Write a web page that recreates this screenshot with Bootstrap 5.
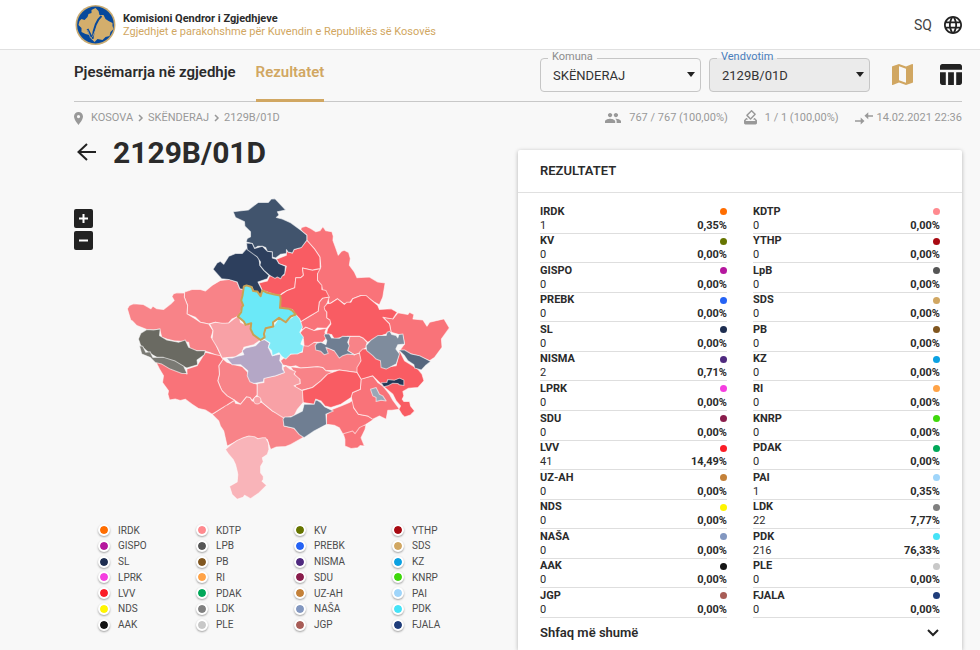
<!DOCTYPE html>
<html lang="sq">
<head>
<meta charset="utf-8">
<meta name="viewport" content="width=device-width, initial-scale=1">
<title>Rezultatet - 2129B/01D</title>
<link href="https://cdn.jsdelivr.net/npm/bootstrap@5.3.0/dist/css/bootstrap.min.css" rel="stylesheet">
<style>
body { font-family: Roboto, "Liberation Sans", sans-serif; background: #f8f8f8; color: #2b2b2b; font-size: 12px; line-height: 16px; }
a { color: inherit; text-decoration: none; }
.page-pad { padding-left: 74px; padding-right: 18px; }
.topbar { background: #fff; border-bottom: 1px solid #e0e0e0; height: 50px; }
.org { font-size: 11px; line-height: 13px; margin-left: 6px; }
.org b { font-weight: 700; }
.gold { color: #d1a762; }
.lang { font-size: 14px; color: #444; }
.toolbar { border-bottom: 1px solid #c8c8c8; min-height: 51px; }
.tab { font-size: 15px; font-weight: 600; line-height: 20px; padding: 12px 0 17px; border-bottom: 3px solid transparent; margin-bottom: -1px; }
.tab.on { color: #d1a762; border-color: #d1a762; margin-left: 20px; }
.field { width: 161px; height: 34px; margin-top: 8px; }
.field select { appearance: none; width: 100%; height: 100%; border: 1px solid #c6c6c6; border-radius: 4px; background: transparent; padding: 2px 12px 0; font-size: 13px; color: #333; }
.field.on select { background: #ebebeb; }
.field label { position: absolute; left: 8px; top: -9px; padding: 0 4px; font-size: 11px; line-height: 16px; color: #8d8d8d; background: linear-gradient(#f8f8f8 0 0) bottom / 100% 8px no-repeat; }
.field.on label { color: #4a7ebb; background: linear-gradient(#ebebeb 0 0) bottom / 100% 7px no-repeat; }
.field svg { position: absolute; right: 5px; top: 14px; pointer-events: none; }
.views { gap: 27px; margin-left: 22px; padding-top: 14px; }
.muted { color: #999; font-size: 11px; line-height: 16px; padding-top: 8px; }
.content { padding-top: 4px; }
.place { font-size: 30px; font-weight: 700; line-height: 36px; }
.map-area { padding-top: 18px; }
.map-zoom { position: absolute; left: 0; top: 37px; gap: 3px; }
.map-zoom button { width: 19px; height: 19px; border: 0; border-radius: 2px; background: #222; color: #fff; padding: 0; display: grid; place-items: center; }
.map { display: block; width: 76%; margin-left: 46px; }
.map polygon, .map circle { stroke: #fff; stroke-opacity: .6; stroke-width: 3; stroke-linejoin: round; }
.map .picked { stroke: #c9a254; stroke-opacity: 1; stroke-width: 6; }
.legend { display: grid; grid-template-columns: repeat(4, 1fr); grid-auto-rows: 1fr; min-height: 110px; margin-top: 11px; padding: 0 28px 0 24px; font-size: 10px; line-height: 15px; color: #4c4c4c; }
.legend i { width: 12px; height: 12px; border: 2px solid #fff; border-radius: 50%; box-shadow: 0 1px 2px rgba(0,0,0,.35); margin-right: 8px; background-clip: padding-box; }
.results { background: #fff; box-shadow: 0 1px 4px rgba(0,0,0,.28); border-radius: 2px 2px 0 0; margin-top: 20px; }
.results h2 { font-size: 13px; font-weight: 600; line-height: 16px; padding: 13px 22px; border-bottom: 1px solid #e0e0e0; margin-bottom: 11px; }
.scores { display: grid; grid-template-columns: 1fr 1fr; column-gap: 26px; grid-auto-rows: 1fr; min-height: 414px; padding: 0 22px; font-size: 11px; }
.score { display: grid; grid-template-columns: 1fr auto; align-content: end; line-height: 14px; border-bottom: 1px solid #dedede; }
.score b { font-weight: 700; }
.score i { width: 7px; height: 7px; border-radius: 50%; place-self: center end; }
.more { font-size: 13px; font-weight: 600; line-height: 16px; padding: 7px 22px; border: 0; background: none; color: inherit; }
</style>
</head>
<body class="d-flex flex-column min-vh-100">
<header class="topbar page-pad d-flex align-items-center">
  <svg width="43" height="42" viewBox="0 0 42 42" aria-hidden="true">
    <circle cx="21" cy="21" r="20" fill="#c9ab72"/><circle cx="21" cy="21" r="18.4" fill="#07499c"/>
    <path fill="#d3ae6c" d="M5 17l2-2 3 1 3-3 1-3 3-1 0-3 4-2 3 3 1 4 4 0 2 4 3 2 4 2 0 3 1 3-3 3-1 4-4 1-3 3-5-1-3 3-3-3-2-4-4-1-4-2 0-4-3-3z"/>
    <path d="M27 12c-6 5-8 13-9 23M13 25l4 8" fill="none" stroke="#07499c" stroke-width="2"/>
    <path d="M13 26l3 8 3 2M22 24l-4 9" fill="none" stroke="#b9a98a" stroke-width=".8"/>
  </svg>
  <div class="org">
    <div><b>Komisioni Qendror i Zgjedhjeve</b></div>
    <div class="gold">Zgjedhjet e parakohshme për Kuvendin e Republikës së Kosovës</div>
  </div>
  <a href="#" class="lang ms-auto d-flex align-items-center gap-2">SQ
    <svg class="ms-1" width="18" height="18" viewBox="2 2 20 20" fill="#222"><path d="M11.99 2C6.47 2 2 6.48 2 12s4.47 10 9.99 10C17.52 22 22 17.52 22 12S17.52 2 11.99 2zm6.93 6h-2.95c-.32-1.25-.78-2.45-1.38-3.56 1.84.63 3.37 1.91 4.33 3.56zM12 4.04c.83 1.2 1.48 2.53 1.91 3.96h-3.82c.43-1.43 1.08-2.76 1.91-3.96zM4.26 14C4.1 13.36 4 12.69 4 12s.1-1.36.26-2h3.38c-.08.66-.14 1.32-.14 2s.06 1.34.14 2H4.26zm.82 2h2.95c.32 1.25.78 2.45 1.38 3.56-1.84-.63-3.37-1.9-4.33-3.56zm2.95-8H5.08c.96-1.66 2.49-2.93 4.33-3.56C8.81 5.55 8.35 6.75 8.03 8zM12 19.96c-.83-1.2-1.48-2.53-1.91-3.96h3.82c-.43 1.43-1.08 2.76-1.91 3.96zM14.34 14H9.66c-.09-.66-.16-1.32-.16-2s.07-1.35.16-2h4.68c.09.65.16 1.32.16 2s-.07 1.34-.16 2zm.25 5.56c.6-1.11 1.06-2.31 1.38-3.56h2.95c-.96 1.65-2.49 2.93-4.33 3.56zM16.36 14c.08-.66.14-1.32.14-2s-.06-1.34-.14-2h3.38c.16.64.26 1.31.26 2s-.1 1.36-.26 2h-3.38z"/></svg>
  </a>
</header>

<main class="page-pad flex-grow-1 d-flex flex-column">
  <div class="toolbar d-flex align-items-start">
    <nav class="d-flex align-self-stretch">
      <a href="#" class="tab">Pjesëmarrja në zgjedhje</a>
      <a href="#" class="tab on" aria-current="page">Rezultatet</a>
    </nav>
    <div class="d-flex ms-auto gap-2">
      <div class="field position-relative">
        <select id="komuna"><option>SKËNDERAJ</option></select><label for="komuna">Komuna</label>
        <svg width="10" height="6" viewBox="0 0 10 6"><path d="M1 0h8L5 5z" fill="#222"/></svg>
      </div>
      <div class="field on position-relative">
        <select id="vend"><option>2129B/01D</option></select><label for="vend">Vendvotim</label>
        <svg width="10" height="6" viewBox="0 0 10 6"><path d="M1 0h8L5 5z" fill="#222"/></svg>
      </div>
    </div>
    <div class="views d-flex">
      <button class="btn border-0 p-0 lh-1" aria-label="Harta"><svg width="21" height="21" viewBox="3 3 18 18" fill="#d1a762"><path d="M20.5 3l-.16.03L15 5.1 9 3 3.36 4.9c-.21.07-.36.25-.36.48V20.5c0 .28.22.5.5.5l.16-.03L9 18.9l6 2.1 5.64-1.9c.21-.07.36-.25.36-.48V3.5c0-.28-.22-.5-.5-.5zM15 19l-6-2.11V5l6 2.11V19z"/></svg></button>
      <button class="btn border-0 p-0 lh-1" aria-label="Tabela"><svg width="22" height="21" viewBox="3 3 19 18" fill="#222"><path d="M10 10.02h5V21h-5zM17 21h3c1.1 0 2-.9 2-2v-9h-5v11zm3-18H5c-1.1 0-2 .9-2 2v3h19V5c0-1.1-.9-2-2-2zM3 19c0 1.1.9 2 2 2h3V10H3v9z"/></svg></button>
    </div>
  </div>

  <div class="muted d-flex align-items-center">
    <svg class="me-2" width="9" height="13" viewBox="5 2 14 20" fill="#999"><path d="M12 2C8.13 2 5 5.13 5 9c0 5.25 7 13 7 13s7-7.75 7-13c0-3.87-3.13-7-7-7zm0 9.5a2.5 2.5 0 0 1 0-5 2.5 2.5 0 0 1 0 5z"/></svg>
    <nav class="d-flex align-items-center gap-1" aria-label="breadcrumb">
      <a href="#">KOSOVA</a><svg width="7" height="8" viewBox="0 0 7 8" fill="none" stroke="#999" stroke-width="1.5"><path d="M2 1l3 3-3 3"/></svg>
      <a href="#">SKËNDERAJ</a><svg width="7" height="8" viewBox="0 0 7 8" fill="none" stroke="#999" stroke-width="1.5"><path d="M2 1l3 3-3 3"/></svg>
      <a href="#">2129B/01D</a>
    </nav>
    <div class="d-flex align-items-center ms-auto">
      <svg class="me-2" width="16" height="16" viewBox="1 1 22 22" fill="#999"><path d="M16 11c1.66 0 2.99-1.34 2.99-3S17.66 5 16 5s-3 1.34-3 3 1.34 3 3 3zm-8 0c1.66 0 2.99-1.34 2.99-3S9.66 5 8 5 5 6.34 5 8s1.34 3 3 3zm0 2c-2.33 0-7 1.17-7 3.5V19h14v-2.5c0-2.33-4.67-3.5-7-3.5zm8 0c-.29 0-.62.02-.97.05 1.16.84 1.97 1.97 1.97 3.45V19h6v-2.5c0-2.33-4.67-3.5-7-3.5z"/></svg>
      <span>767 / 767 (100,00%)</span>
      <svg class="ms-3 me-2" width="13" height="16" viewBox="3 2 18 22" fill="#999"><path d="M18 13h-.68l-2 2h1.91L19 17H5l1.78-2h2.05l-2-2H6l-3 3v4c0 1.1.89 2 1.99 2H19c1.1 0 2-.89 2-2v-4l-3-3zm-1-5.05l-4.95 4.95-3.54-3.54 4.95-4.95L17 7.95zm-4.24-5.66L6.39 8.66c-.39.39-.39 1.02 0 1.41l4.95 4.95c.39.39 1.02.39 1.41 0l6.36-6.36c.39-.39.39-1.02 0-1.41L14.16 2.3c-.38-.4-1.01-.4-1.4-.01z"/></svg>
      <span>1 / 1 (100,00%)</span>
      <svg class="ms-3 me-1" width="18" height="13" viewBox="0 0 19 13" fill="#999"><path d="M0 8.3h6V5.5l4 3.7-4 3.7v-3H0zM19 3h-5V0l-4 3.7 4 3.7V4.6h5z"/></svg>
      <span>14.02.2021 22:36</span>
    </div>
  </div>

  <div class="content row gx-0 flex-grow-1">
    <section class="col-6">
      <div class="d-flex align-items-center pt-2">
        <a href="#" class="me-3 lh-1" aria-label="Kthehu"><svg width="23" height="22" viewBox="0 0 23 22" fill="none" stroke="#222" stroke-width="2"><path d="M22 10H5M13 2l-8.500 8 8.500 8"/></svg></a>
        <h1 class="place mb-0 lh-1">2129B/01D</h1>
      </div>
      <div class="map-area position-relative mt-1">
        <div class="map-zoom d-grid">
          <button aria-label="Zmadho"><svg width="9" height="9" viewBox="0 0 9 9" stroke="#fff" stroke-width="2"><path d="M0 4.5h9M4.5 0v9"/></svg></button>
          <button aria-label="Zvogëlo"><svg width="9" height="9" viewBox="0 0 9 9" stroke="#fff" stroke-width="2"><path d="M0 4.5h9"/></svg></button>
        </div>
        <svg class="map" viewBox="0 0 1008 960" role="img" aria-label="Harta e komunave">
          <g fill="#f88388">
            <polygon points="193,305 215,297 240,297 255,302 275,285 300,270 325,267 350,275 358,295 368,297 365,325 368,345 360,365 352,378 335,385 325,397 305,400 285,395 265,400 240,395 225,380 200,370 202,345 192,320"/>
            <polygon points="22,355 28,345 40,340 70,342 92,355 98,347 110,355 130,357 152,340 162,330 155,318 160,310 170,307 193,308 192,320 202,345 200,370 225,385 240,395 265,400 278,420 272,440 285,455 290,470 305,502 270,486 250,480 210,480 205,455 180,452 160,450 140,445 125,440 118,415 100,418 80,417 50,405 38,392 32,388 28,375"/>
            <polygon points="480,510 500,492 545,485 545,465 562,460 580,455 600,460 640,480 700,492 715,485 722,505 708,545 655,538 615,540 605,530 590,528 540,532 525,525 510,528 485,522"/>
            <polygon points="510,528 540,532 590,528 605,530 615,540 635,543 615,555 600,570 575,590 542,598 525,590 523,582 538,578 537,565 525,562 520,545"/>
            <polygon points="685,438 715,437 726,442 738,455 735,470 720,485 700,492 680,480"/>
            <polygon points="308,505 320,515 345,523 365,527 382,545 387,565 400,577 410,580 410,612 395,628 388,620 378,618 360,640 342,628 320,615 305,600 300,590 292,570 297,550 295,525"/>
            <polygon points="275,670 310,648 318,635 320,642 342,628 345,637 360,640 378,618 388,620 395,630 425,635 455,660 490,675 490,705 520,712 550,738 510,760 495,766 467,768 450,775 440,745 412,743 380,737 350,750 320,765 310,720 300,705 295,690"/>
          </g>
          <polygon fill="#f9b4b9" points="315,775 330,762 350,748 368,740 385,735 402,737 412,743 425,740 435,740 443,755 445,775 440,790 425,800 428,812 420,825 420,845 428,855 428,865 424,870 438,882 415,905 390,922 380,916 372,912 368,918 350,924 335,910 327,885 350,872 352,850 350,840 345,820 338,805 325,790"/>
          <g fill="#f97379">
            <polygon points="540,118 542,112 555,108 570,115 585,125 597,122 606,110 615,122 633,125 637,138 636,150 645,175 652,195 662,183 670,180 683,187 688,205 685,225 700,245 708,262 745,260 770,275 792,278 785,320 775,343 760,335 735,318 720,315 695,325 685,338 670,340 650,325 625,340 620,320 605,300 603,290 590,270 590,245 600,230 597,200 580,175 558,150 558,135 545,125"/>
            <polygon points="625,320 620,335 612,355 618,365 618,382 630,390 628,400 617,413 590,412 580,420 555,410 545,418 537,405 540,393 565,378 592,362 595,335 605,323"/>
            <polygon points="545,418 555,410 580,420 617,413 612,425 620,440 605,455 580,455 562,467 550,465 548,445 535,430"/>
            <polygon points="785,380 815,385 830,367 860,372 865,365 878,372 875,385 905,388 917,407 925,395 968,385 984,412 960,445 962,470 940,500 925,510 890,495 835,480 850,460 845,435 810,425 805,400"/>
            <polygon points="107,513 130,510 200,550 200,535 230,525 255,485 300,495 308,505 295,525 297,550 292,570 300,590 305,600 320,615 342,628 320,642 310,648 275,670 255,657 235,653 215,640 195,625 180,629 165,624 148,627 143,610 145,600 127,575 130,555 118,535"/>
            <polygon points="617,670 635,655 660,645 685,635 700,625 698,650 712,670 740,675 758,685 735,700 732,715 720,740 730,765 718,763 710,770 690,772 672,765 672,740 655,710 640,703 617,700"/>
            <polygon points="735,700 715,710 702,728 695,720 667,728 672,745 672,765 690,772 710,770 718,763 730,765 720,740 732,715"/>
            <polygon points="690,615 695,605 718,595 720,565 755,555 770,575 785,585 805,610 815,628 835,655 812,658 800,658 795,685 775,675 755,685 740,675 712,670 698,650"/>
          </g>
          <g fill="#f95c63">
            <polygon points="558,150 580,175 597,200 598,235 585,237 575,240 555,235 545,233 548,255 540,262 525,262 522,292 500,300 485,308 478,315 462,312 440,305 425,300 415,278 440,272 447,257 490,255 497,228 475,220 467,207 497,195 497,180 502,185 515,188 520,178 540,172"/>
            <polygon points="545,233 575,240 598,235 590,250 590,270 603,285 603,297 615,300 625,320 605,323 595,335 592,362 565,378 540,393 525,375 515,357 480,352 478,315 500,300 522,292 525,262 540,262 548,255"/>
            <polygon points="610,350 618,340 630,338 650,325 670,342 678,335 690,335 695,325 720,315 735,315 750,328 770,345 775,357 810,355 828,365 815,385 785,380 805,400 810,425 780,435 755,448 740,455 726,442 715,437 680,437 640,445 632,432 617,430 620,415 630,400 627,388 618,382 618,365 612,358"/>
            <polygon points="715,485 725,475 737,475 780,510 785,530 825,525 835,480 850,510 890,535 902,550 908,570 890,590 862,592 845,602 848,615 843,625 848,632 865,632 868,645 880,660 868,672 850,678 842,670 833,655 838,645 825,630 815,610 785,585 755,555 720,565 708,545 708,530 720,510"/>
            <polygon points="542,600 575,590 600,570 620,550 655,538 708,545 720,565 718,595 695,605 690,620 660,640 630,650 612,645 600,630 585,625 580,640 547,635"/>
          </g>
          <polygon fill="#41546d" points="338,65 362,62 383,60 413,37 443,37 452,27 463,26 495,60 470,65 475,75 467,82 485,87 510,98 540,120 558,135 558,150 542,172 520,178 515,188 502,185 497,178 497,190 480,192 465,203 455,200 455,185 440,183 435,172 425,168 412,168 402,175 395,160 377,155 380,145 390,140 390,125 373,108 372,95 345,82"/>
          <polygon fill="#2d3f5d" points="278,237 290,218 300,213 310,222 325,198 345,190 365,190 378,175 395,183 415,205 418,225 430,240 445,255 440,265 412,275 425,300 418,317 400,305 395,290 375,285 368,297 358,295 350,275 325,267 303,265"/>
          <polygon fill="#2d3f5d" points="378,158 395,160 402,175 425,168 440,183 455,185 455,203 467,207 475,220 494,228 492,250 484,258 480,265 470,260 463,264 447,255 430,240 418,225 420,215 410,200 380,178"/>
          <g fill="#f8a1a6">
            <polygon points="268,400 285,395 305,398 325,397 340,385 355,375 360,395 375,403 388,400 395,425 420,448 400,462 370,470 365,485 345,498 305,502 295,480 290,470 275,445 278,420"/>
            <polygon points="410,578 430,575 430,562 465,555 490,545 487,530 495,525 508,535 525,542 520,550 537,565 538,578 520,585 545,600 547,635 530,655 520,675 490,682 455,660 425,635 410,615"/>
            <circle cx="410" cy="628" r="11"/>
          </g>
          <polygon fill="#b4a7c6" points="318,502 335,502 350,497 370,492 365,480 375,472 405,465 420,450 433,447 447,457 443,470 455,495 480,490 477,510 485,520 485,535 492,545 465,555 430,563 428,573 400,578 388,573 380,555 382,540 360,522 335,522"/>
          <polygon fill="#80ebf8" points="430,445 435,413 458,408 475,382 495,395 525,372 537,385 542,400 545,410 537,425 548,440 540,460 548,465 545,482 530,490 510,490 495,505 483,497 475,486 455,495 453,480 443,470 448,457"/>
          <polygon class="picked" fill="#6be9f8" points="370,288 378,285 393,290 398,302 410,303 420,317 425,300 440,307 462,312 478,315 480,325 478,352 505,355 515,360 525,372 510,378 495,395 475,382 457,395 458,408 435,413 430,430 432,440 420,448 398,432 390,415 392,398 375,403 370,393 352,378 362,365 364,350 368,345 362,330 366,315"/>
          <g fill="#6f7e92">
            <polygon points="583,465 588,458 600,455 615,462 618,450 610,435 612,430 625,430 632,442 655,443 665,437 687,438 680,455 685,465 680,480 700,492 680,490 665,495 655,502 640,480 615,470 622,488 610,492 600,482 585,478"/>
            <polygon points="487,685 492,678 510,678 545,660 550,640 580,640 585,625 600,635 612,648 637,660 615,670 617,700 580,720 550,740 535,730 520,712 490,705"/>
          </g>
          <polygon fill="#7f8c9d" points="735,465 750,448 770,435 795,435 798,425 806,422 812,432 825,435 830,442 833,432 845,430 850,460 830,462 824,475 835,490 825,520 795,535 780,530 778,510 765,505 755,495 737,480"/>
          <polygon fill="#56677e" points="833,478 850,478 870,490 895,495 928,512 912,525 900,538 880,532 878,522 860,510 850,495"/>
          <polygon fill="#233857" points="780,576 797,575 800,566 820,568 835,562 848,568 848,584 835,582 830,578 815,577 800,585 788,588"/>
          <polygon fill="#9aa7b6" points="748,595 765,590 775,610 785,615 795,630 780,628 765,632 765,620 755,615"/>
          <polygon fill="#6a6a62" points="55,445 62,428 80,417 100,418 120,415 118,435 140,448 175,455 195,448 205,470 230,480 255,480 252,492 230,508 232,522 200,532 165,515 110,500 85,485 62,465"/>
          <polygon fill="#7a7a74" points="58,465 68,467 77,485 90,483 98,500 130,500 165,511 190,526 200,548 185,548 150,535 125,520 105,515 90,500 65,490"/>
        </svg>
      </div>
      <div class="legend" id="legend"></div>
    </section>

    <section class="col-6 d-flex flex-column">
      <div class="results flex-grow-1 d-flex flex-column">
        <h2>REZULTATET</h2>
        <div class="scores" id="scores"></div>
        <button class="more d-flex justify-content-between align-items-center">Shfaq më shumë
          <svg width="14" height="10" viewBox="0 0 14 10" fill="none" stroke="#222" stroke-width="2"><path d="M2 2l5 5 5-5"/></svg></button>
      </div>
    </section>
  </div>
</main>

<script src="https://cdn.jsdelivr.net/npm/bootstrap@5.3.0/dist/js/bootstrap.bundle.min.js"></script>
<script>
const parties = [
  ["IRDK", "#ff6d00", 1, "0,35"], ["KDTP", "#ff8a8f", 0, "0,00"],
  ["KV", "#667500", 0, "0,00"], ["YTHP", "#a80a12", 0, "0,00"],
  ["GISPO", "#b5179e", 0, "0,00"], ["LpB", "#555555", 0, "0,00"],
  ["PREBK", "#2563f5", 0, "0,00"], ["SDS", "#d1a762", 0, "0,00"],
  ["SL", "#1d2d50", 0, "0,00"], ["PB", "#80561f", 0, "0,00"],
  ["NISMA", "#4f2a7f", 2, "0,71"], ["KZ", "#0ba1e2", 0, "0,00"],
  ["LPRK", "#f53ee0", 0, "0,00"], ["RI", "#ffa347", 0, "0,00"],
  ["SDU", "#8a1d4c", 0, "0,00"], ["KNRP", "#3fd80c", 0, "0,00"],
  ["LVV", "#fb1d27", 41, "14,49"], ["PDAK", "#00a859", 0, "0,00"],
  ["UZ-AH", "#c48139", 0, "0,00"], ["PAI", "#9fd5fa", 1, "0,35"],
  ["NDS", "#fff500", 0, "0,00"], ["LDK", "#808080", 22, "7,77"],
  ["NAŠA", "#8297c0", 0, "0,00"], ["PDK", "#45e3f7", 216, "76,33"],
  ["AAK", "#151515", 0, "0,00"], ["PLE", "#c8c8c8", 0, "0,00"],
  ["JGP", "#a85d57", 0, "0,00"], ["FJALA", "#1f3d7a", 0, "0,00"]
];
document.getElementById("legend").innerHTML = parties.map(([n, c]) =>
  `<div class="d-flex align-items-center"><i style="background-color:${c}"></i>${n.toUpperCase()}</div>`).join("");
document.getElementById("scores").innerHTML = parties.map(([n, c, v, p]) =>
  `<div class="score"><b>${n}</b><i style="background-color:${c}"></i><span>${v}</span><b>${p}%</b></div>`).join("");
</script>
</body>
</html>
